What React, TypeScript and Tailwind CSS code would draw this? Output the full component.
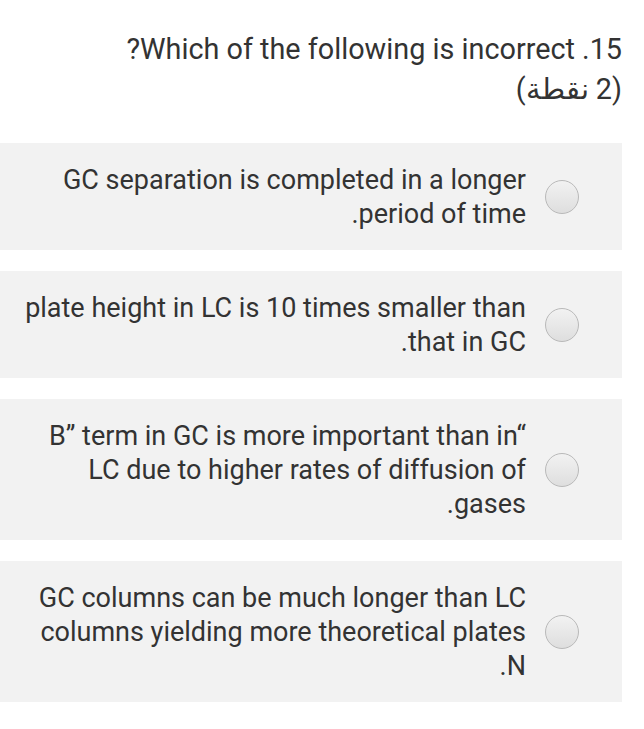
import React from "react";

const options: string[][] = [
  ["GC separation is completed in a longer", ".period of time"],
  ["plate height in LC is 10 times smaller than", ".that in GC"],
  ["B\u201D term in GC is more important than in\u201C", "LC due to higher rates of diffusion of", ".gases"],
  ["GC columns can be much longer than LC", "columns yielding more theoretical plates", ".N"],
];

function Radio() {
  return (
    <div className="w-[34px] h-[34px] shrink-0 rounded-full border border-[#b9b9b9] bg-gradient-to-b from-[#f2f2f2] to-[#dedede]" />
  );
}

export default function App() {
  return (
    <div className="w-[644px] h-[729px] bg-white text-[#333333] font-['Roboto',sans-serif]">
      <div className="pt-[29px] pr-[22px] text-right text-[28.8px] leading-[40px]">
        <div>?Which of the following is incorrect .15</div>
        <div dir="rtl">(2 نقطة)</div>
      </div>
      <div className="mt-[34px] mr-[22px] flex flex-col gap-[21px]">
        {options.map((lines, i) => (
          <div key={i} className="bg-[#f2f2f2] flex items-center justify-end pt-[20px] pb-[19px] pr-[43px]">
            <div className="text-right text-[27px] leading-[34px]">
              {lines.map((l) => (
                <div key={l}>{l}</div>
              ))}
            </div>
            <div className="ml-[19px]">
              <Radio />
            </div>
          </div>
        ))}
      </div>
    </div>
  );
}
